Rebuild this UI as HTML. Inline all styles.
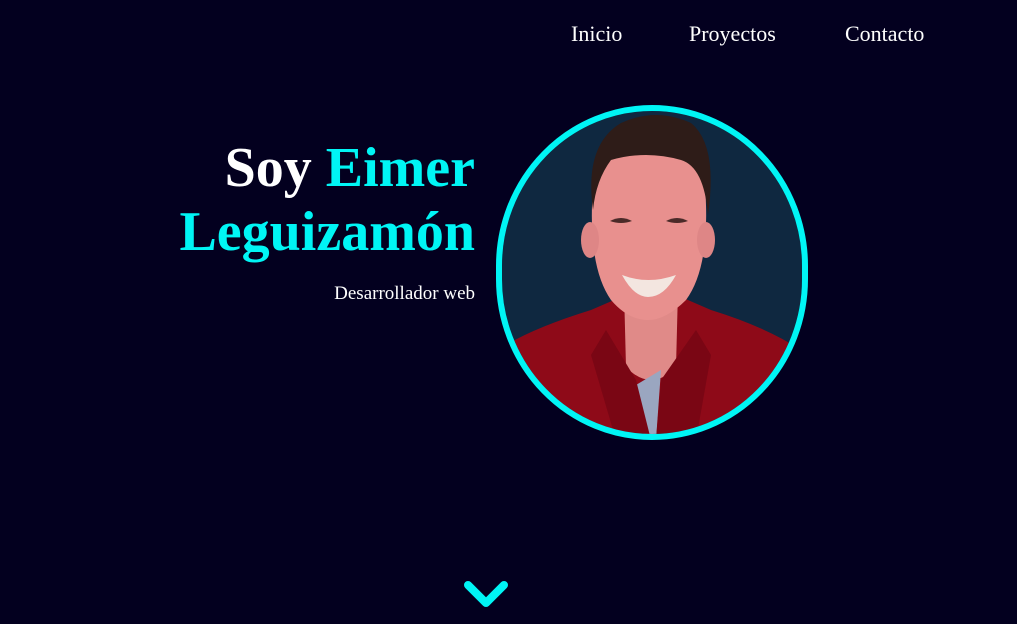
<!DOCTYPE html>
<html><head><meta charset="utf-8"><style>
html,body{margin:0;padding:0}
body{width:1017px;height:624px;background:#03001f;overflow:hidden;position:relative;font-family:"Liberation Serif",serif;color:#fff}
.nav a{position:absolute;top:21px;font-size:22px;color:#fff;text-decoration:none}
h1{position:absolute;right:542px;top:136px;margin:0;font-size:56px;line-height:64px;text-align:right;font-weight:bold;white-space:nowrap}
.c{color:#00f5f5}
.sub{position:absolute;right:542px;top:283px;font-size:19px}
.ph{position:absolute;left:496px;top:105px}
.chev{position:absolute;left:463px;top:580px}
</style></head><body>
<div class="nav"><a style="left:571px">Inicio</a><a style="left:689px">Proyectos</a><a style="left:845px">Contacto</a></div>
<h1>Soy <span class="c">Eimer</span><br><span class="c">Leguizamón</span></h1>
<div class="sub">Desarrollador web</div>
<svg class="ph" width="312" height="335" viewBox="0 0 312 335">
<defs><clipPath id="k"><rect x="6" y="6" width="300" height="323" rx="150" ry="155"/></clipPath></defs>
<g clip-path="url(#k)">
<rect width="312" height="335" fill="#0f2840"/>
<path d="M10 240 Q40 222 95 205 L125 192 L185 192 L215 205 Q270 222 305 245 L312 335 L0 335Z" fill="#8e0a18"/>
<path d="M128 185 L182 185 L180 262 Q155 288 130 262Z" fill="#e08a88"/>
<path d="M140 280 L165 265 L160 335 L148 335Z" fill="#9aa6c0"/>
<path d="M110 225 L140 275 L155 335 L120 335 L95 250Z" fill="#7a0614"/>
<path d="M200 225 L165 275 L160 335 L200 335 L215 250Z" fill="#7a0614"/>
<path d="M96 100 Q96 40 152 40 Q210 40 210 100 Q212 165 190 195 Q170 215 152 215 Q132 215 115 195 Q94 165 96 100Z" fill="#e8908e"/>
<ellipse cx="94" cy="135" rx="9" ry="18" fill="#de8686"/>
<ellipse cx="210" cy="135" rx="9" ry="18" fill="#de8686"/>
<path d="M97 105 Q88 40 125 18 Q160 2 195 18 Q222 40 212 110 Q208 62 185 55 Q150 45 115 55 Q100 75 97 105Z" fill="#2e1c18"/>
<path d="M126 170 Q152 180 180 170 Q168 192 152 192 Q138 192 126 170Z" fill="#f3e6e0"/>
<path d="M114 116 Q125 110 136 116 Q125 120 114 116Z" fill="#4a2a28"/>
<path d="M170 116 Q181 110 192 116 Q181 120 170 116Z" fill="#4a2a28"/>
</g>
<rect x="3" y="3" width="306" height="329" rx="153" ry="158" fill="none" stroke="#00f5f5" stroke-width="6"/>
</svg>
<svg class="chev" width="46" height="30" viewBox="0 0 46 30"><path d="M5 5 L23 23 L41 5" fill="none" stroke="#00f5f5" stroke-width="8" stroke-linecap="round" stroke-linejoin="round"/></svg>
</body></html>
